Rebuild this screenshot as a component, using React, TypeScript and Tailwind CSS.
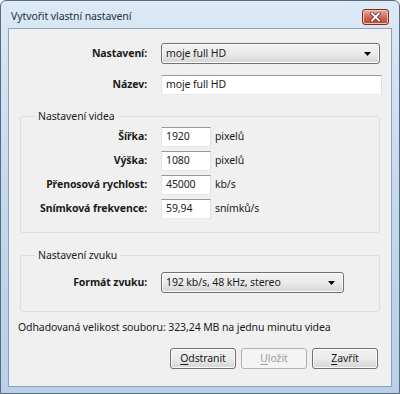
import { ReactNode } from "react";

const font = { fontFamily: "'Noto Sans', 'Open Sans', sans-serif" };

const Arrow = () => (
  <svg width="7" height="4" viewBox="0 0 7 4" className="shrink-0">
    <path d="M0 0h7L3.5 4z" fill="#000" />
  </svg>
);

const Select = ({ value, width }: { value: string; width: string }) => (
  <div
    className={`${width} h-[21px] flex items-center justify-between pl-[4px] pr-[8px] rounded-[3px] border border-[#707070] bg-gradient-to-b from-[#f2f2f2] via-[#ebebeb] to-[#d4d4d4] shadow-[inset_0_0_0_1px_#fcfcfc]`}
  >
    <span>{value}</span>
    <Arrow />
  </div>
);

const Input = ({ value, width }: { value: string; width: string }) => (
  <div
    className={`${width} h-[20px] flex items-center pl-[4px] bg-white border border-[#abadb3] border-t-[#949aa1] border-l-[#e2e3ea] border-r-[#dbdfe6] border-b-[#e3e9ef]`}
  >
    {value}
  </div>
);

const Row = ({
  label,
  labelWidth,
  children,
}: {
  label: string;
  labelWidth: string;
  children: ReactNode;
}) => (
  <div className="flex items-center">
    <div className={`${labelWidth} text-right font-bold pr-[1px]`}>{label}</div>
    <div className="ml-[13px] flex items-center">{children}</div>
  </div>
);

const Button = ({
  mn,
  rest,
  disabled = false,
}: {
  mn: string;
  rest: string;
  disabled?: boolean;
}) => (
  <div
    className={`w-[66px] h-[21px] flex items-center justify-center rounded-[3px] border ${
      disabled
        ? "border-[#adb2b5] bg-[#f4f4f4] text-[#a0a0a0]"
        : "border-[#707070] bg-gradient-to-b from-[#f2f2f2] via-[#ebebeb] to-[#d4d4d4] shadow-[inset_0_0_0_1px_#fcfcfc]"
    }`}
  >
    <span className="underline underline-offset-2 decoration-1">{mn}</span>
    {rest}
  </div>
);

const Group = ({ title, children, className }: { title: string; children: ReactNode; className: string }) => (
  <fieldset className={`mx-[11px] border border-[#d5dfe5] rounded-[3px] ${className}`}>
    <legend className="ml-[14px] px-[3px] leading-[16px]">{title}</legend>
    {children}
  </fieldset>
);

export default function App() {
  return (
    <div
      className="w-[400px] h-[394px] flex flex-col text-[10.5px] tracking-[-0.1px] text-[#1b1b1b] bg-gradient-to-b from-[#dce9f6] via-[#c4d8ee] to-[#b9d0ea] border border-[#5b6b7e] rounded-t-[6px] overflow-hidden"
      style={font}
    >
      {/* title bar */}
      <div className="h-[27px] flex items-start justify-between pl-[10px] pr-[10px]">
        <span className="mt-[8px] text-[10.5px] text-[#1e2f43]">Vytvořit vlastní nastavení</span>
        <div className="mt-[8px] w-[27px] h-[16px] flex items-center justify-center rounded-[3px] border border-[#7a2f24] bg-gradient-to-b from-[#eab2a4] via-[#d16a55] to-[#c0412b] shadow-[inset_0_0_0_1px_#f2c1b4]">
          <svg width="11" height="10" viewBox="0 0 11 10">
            <path d="M2 1.5l7 7M9 1.5l-7 7" stroke="#5a1d14" strokeWidth="3.4" strokeLinecap="square" />
            <path d="M2 1.5l7 7M9 1.5l-7 7" stroke="#fff" strokeWidth="2" strokeLinecap="square" />
          </svg>
        </div>
      </div>

      {/* client */}
      <div className="flex-1 mx-[7px] mb-[6px] bg-[#f0f0f0] border border-[#8ea3b9] flex flex-col">
        <div className="mt-[14px]">
          <Row label="Nastavení:" labelWidth="w-[139px]">
            <Select value="moje full HD" width="w-[219px]" />
          </Row>
        </div>
        <div className="mt-[11px]">
          <Row label="Název:" labelWidth="w-[139px]">
            <Input value="moje full HD" width="w-[221px]" />
          </Row>
        </div>

        <Group title="Nastavení videa" className="mt-[13px] pb-[13px]">
          <div className="mt-[3px] flex flex-col gap-[4px]">
            {[
              ["Šířka:", "1920", "pixelů"],
              ["Výška:", "1080", "pixelů"],
              ["Přenosová rychlost:", "45000", "kb/s"],
              ["Snímková frekvence:", "59,94", "snímků/s"],
            ].map(([l, v, u]) => (
              <Row key={l} label={l} labelWidth="w-[127px]">
                <Input value={v} width="w-[50px]" />
                <span className="ml-[4px]">{u}</span>
              </Row>
            ))}
          </div>
        </Group>

        <Group title="Nastavení zvuku" className="mt-[14px] pb-[18px]">
          <div className="mt-[9px]">
            <Row label="Formát zvuku:" labelWidth="w-[127px]">
              <Select value="192 kb/s, 48 kHz, stereo" width="w-[183px]" />
            </Row>
          </div>
        </Group>

        <div className="mt-[7px] ml-[9px] leading-[16px]">
          Odhadovaná velikost souboru: 323,24 MB na jednu minutu videa
        </div>

        <div className="mt-[13px] flex justify-end gap-[5px] pr-[13px]">
          <Button mn="O" rest="dstranit" />
          <Button mn="U" rest="ložit" disabled />
          <Button mn="Z" rest="avřít" />
        </div>
      </div>
    </div>
  );
}
